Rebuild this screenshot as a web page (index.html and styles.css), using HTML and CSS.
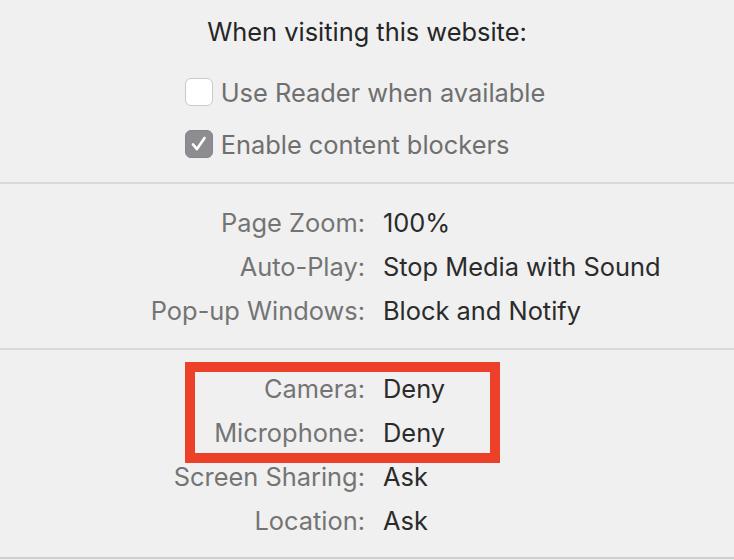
FILE: index.html
```html
<!DOCTYPE html>
<html lang="en">

<head>
    <meta charset="utf-8">
    <meta name="viewport" content="width=device-width, initial-scale=1">
    <title>Website Settings</title>
    <link rel="stylesheet" href="styles.css">
</head>

<body>
    <div class="panel">
        <!-- Per-site toggles -->
        <div class="section section-top">
            <p class="title">When visiting this website:</p>
            <div class="checks">
                <label class="check">
                    <span class="box"></span>
                    <span>Use Reader when available</span>
                </label>
                <label class="check">
                    <span class="box checked">
                        <svg viewBox="0 0 28 28" width="28" height="28">
                            <path d="M7.5 14.5 L11.8 19.5 L20 7.5" fill="none" stroke="#fff" stroke-width="2.8" stroke-linecap="round" stroke-linejoin="round"/>
                        </svg>
                    </span>
                    <span>Enable content blockers</span>
                </label>
            </div>
        </div>

        <!-- Page settings -->
        <div class="section section-mid">
            <div class="rows">
                <span class="label">Page Zoom:</span><span class="value">100%</span>
                <span class="label">Auto-Play:</span><span class="value">Stop Media with Sound</span>
                <span class="label">Pop-up Windows:</span><span class="value">Block and Notify</span>
            </div>
        </div>

        <!-- Permissions -->
        <div class="section section-bottom">
            <div class="rows">
                <span class="label">Camera:</span><span class="value">Deny</span>
                <span class="label">Microphone:</span><span class="value">Deny</span>
                <span class="label">Screen Sharing:</span><span class="value">Ask</span>
                <span class="label">Location:</span><span class="value">Ask</span>
            </div>
            <div class="highlight"></div>
        </div>
    </div>
</body>

</html>
```

FILE: styles.css
```css
body {
    margin: 0;
    background-color: #f0f0f0;
    font-family: Inter, "Noto Sans", sans-serif;
    font-size: 25.4px;
    overflow: hidden;
}

.panel {
    width: 734px;
}

.section {
    border-bottom: 2px solid #d8d8d8;
}

.section-top {
    padding: 10px 0 16px;
}

.title {
    margin: 0;
    height: 44px;
    line-height: 44px;
    text-align: center;
    color: #262626;
}

.checks {
    display: flex;
    flex-direction: column;
    align-items: flex-start;
    gap: 8px;
    width: fit-content;
    margin: 16px auto 0;
    padding-right: 4px;
}

.check {
    display: flex;
    align-items: center;
    gap: 8px;
    height: 44px;
    color: #6f6f6f;
}

.box {
    width: 26px;
    height: 26px;
    border: 1px solid #c9c9c9;
    border-radius: 6px;
    background-color: #fff;
    display: flex;
    align-items: center;
    justify-content: center;
}

.box.checked {
    border-color: #86858a;
    background-color: #8d8c91;
}

.box svg {
    display: block;
}

.section-mid {
    padding: 16px 0 16px;
}

.section-bottom {
    position: relative;
    padding: 16px 0 15px;
    border-bottom-color: #cfcfcf;
}

.rows {
    display: grid;
    grid-template-columns: 365px 1fr;
    column-gap: 18px;
    grid-auto-rows: 44px;
    align-items: center;
}

.label {
    text-align: right;
    color: #747474;
}

.value {
    color: #2b2b2b;
}

/* Red annotation box over Camera / Microphone */
.highlight {
    position: absolute;
    left: 185px;
    top: 12px;
    width: 295px;
    height: 81px;
    border: 10px solid #ec4029;
    pointer-events: none;
}
```
